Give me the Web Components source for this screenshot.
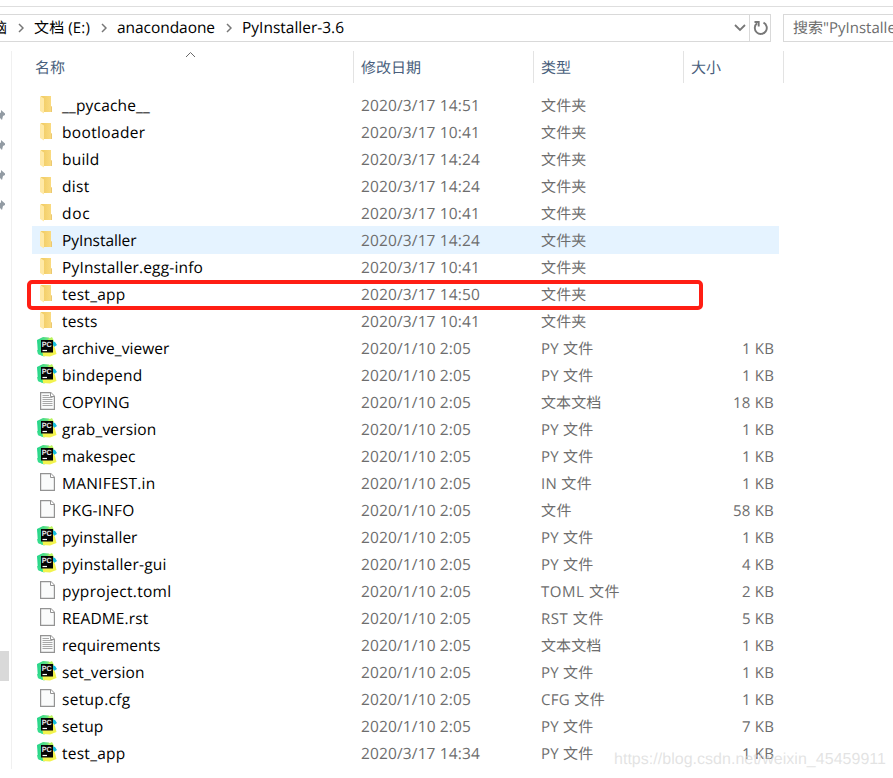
<!DOCTYPE html>
<html lang="zh-CN"><head><meta charset="utf-8"><title>PyInstaller-3.6</title>
<style>
html,body{margin:0;height:100%;overflow:hidden;background:#fff}
body{font:15px/27px "Open Sans","Noto Sans CJK SC",sans-serif;color:#000;text-rendering:geometricPrecision}
</style></head><body>
<explorer-window></explorer-window>
<script>
class FitText extends HTMLElement{
  connectedCallback(){
    const r=this.attachShadow({mode:'open'});
    r.innerHTML='<style>:host{display:inline-block;white-space:pre;vertical-align:top}span{display:inline-block;vertical-align:top}</style><span><slot></slot></span>';
    const s=r.querySelector('span'),w=+this.getAttribute('w');
    if(w){const n=this.textContent.length;s.style.letterSpacing=((w-s.getBoundingClientRect().width)/n).toFixed(3)+'px';}
  }
}
customElements.define('fit-text',FitText);

const folder='<svg width="12" height="18" viewBox="0 0 12 18"><defs><linearGradient id="g"><stop stop-color="#f0cb62"/><stop offset="1" stop-color="#fbdc83"/></linearGradient></defs><path d="M1 0H11V10.5H12V16H3Z" fill="url(#g)"/><path d="M0 0L4 2.6V17.6L0 15Z" fill="#ffe9a6"/><path d="M11 10.5h1V16h-1z" fill="#eac873"/></svg>';
const page=lines=>`<svg width="15" height="18" viewBox="0 0 15 18"><path d="M.6.6H10.7L14.4 4.3V17.4H.6Z" fill="#fafbfb" stroke="#939393" stroke-width="1.2"/><path d="M10.5.6V4.5H14.4" fill="#fff" stroke="#939393"/>${lines?'<path d="M2.5 3.5H9M2.5 5.5H12.5M2.5 7.5H12.5M2.5 9.5H12.5M2.5 11.5H12.5M2.5 13.5H12.5" stroke="#a8a8a8"/>':''}</svg>`;
const pc='<svg width="20" height="20" viewBox="0 0 20 20"><defs><linearGradient id="g" x1="0" x2="1"><stop stop-color="#20d58b"/><stop offset=".55" stop-color="#62e184"/><stop offset="1" stop-color="#b7f45b"/></linearGradient></defs><path d="M0 3L6 0 12 .5 16 4 17 14 7 19.5 1 17Z" fill="url(#g)"/><path d="M11 2L15 0 17 4 15 8Z" fill="#b8f35c"/><path d="M15 4L18 5 20 8 17 10 15 8Z" fill="#17bddc"/><path d="M16 8L18 11 19.5 17 13 19.5 6 19 5 15Z" fill="#f2f34e"/><path d="M0 13l5 1 1 5-5-2Z" fill="#35dd8c"/><path d="M4 3H16V15.5H4Z" fill="#050505"/><path d="M5.5 13.5H10" stroke="#fff" stroke-width="1.2"/><text x="4.8" y="9.5" font-family="Liberation Sans" font-size="7.5" font-weight="700" textLength="10" lengthAdjust="spacingAndGlyphs" fill="#e8e8e8">PC</text></svg>';
class FileIcon extends HTMLElement{
  connectedCallback(){
    const k=this.getAttribute('kind');
    this.attachShadow({mode:'open'}).innerHTML=`<style>:host{display:flex;width:30px;height:27px;box-sizing:border-box;padding:${k==='folder'?'5px 0 0 8px':k==='py'?'3px 0 0 5px':'4px 0 0 8px'}}svg{flex:none;display:block}</style>`+(k==='folder'?folder:k==='py'?pc:page(k==='txt'));
  }
}
customElements.define('file-icon',FileIcon);

const typeWidths={'PY 文件':52.5,'IN 文件':51,'TOML 文件':79,'RST 文件':63,'CFG 文件':64,'文本文档':60.5,'文件':31,'文件夹':45.5};
class FileRow extends HTMLElement{
  connectedCallback(){
    const a=n=>this.getAttribute(n)||'',d=a('date'),s=a('size');
    this.attachShadow({mode:'open'}).innerHTML=`<style>
    :host{display:grid;grid-template-columns:30px 299px 180px 140px 93px;height:27px;width:747px;color:#6d6d6d;position:relative}
    :host([hover])::before{content:"";position:absolute;inset:0 0 -1px;background:#e5f3ff;z-index:-1}
    :host([marked])::after{content:"";position:absolute;left:-5px;top:0;width:668px;height:22px;border:4px solid #ff1e14;border-radius:5px}
    span{white-space:pre;padding-top:2px;height:25px}.n,.d{font-size:15.5px;padding-top:1px}.n{color:#000}.s{text-align:right}</style>
    <file-icon kind="${a('icon')}"></file-icon><span class="n"><fit-text w="${a('w')}">${a('name')}</fit-text></span><span class="d"><fit-text w="${d.length>14?119:110}">${d}</fit-text></span><span><fit-text w="${typeWidths[a('type')]}">${a('type')}</fit-text></span><span class="s">${s?`<fit-text w="${s.length>4?41:32}">${s}</fit-text>`:''}</span>`;
  }
}
customElements.define('file-row',FileRow);

class ColumnHeader extends HTMLElement{
  connectedCallback(){
    this.attachShadow({mode:'open'}).innerHTML=`<style>
    :host{display:grid;grid-template-columns:342px 180px 150px 100px;height:32px;padding-top:9px;color:#4a5f7d;line-height:35px}
    div{box-sizing:border-box;height:32px;border-right:1px solid #e3e3e3;padding-left:7px;position:relative}div:first-of-type{padding-left:23px}
    svg{position:absolute;left:173px;top:0}</style>
    <div>名称<svg width="11" height="7" viewBox="0 0 11 7" fill="none" stroke="#696969"><path d="M1 6L5.5 1.5 10 6"/></svg></div><div>修改日期</div><div>类型</div><div>大小</div>`;
  }
}
customElements.define('column-header',ColumnHeader);

class AddressBar extends HTMLElement{
  connectedCallback(){
    const c='<svg width="6" height="10" viewBox="0 0 6 10" fill="none" stroke="#777" stroke-width="1.5"><path d="M1 1L5 5 1 9"/></svg>';
    this.attachShadow({mode:'open'}).innerHTML=`<style>
    :host{display:flex;gap:12px;height:28px;padding-top:7px;margin-top:6px;border-top:1px solid #dedede}
    .b{box-sizing:border-box;height:28px;border:1px solid #d9d9d9;display:flex;align-items:center;line-height:26px}
    .path{width:771px;border-left:0;overflow:hidden}.path>svg{flex:none}
    .p{flex:none;white-space:pre;height:26px;line-height:27px}.l{font-size:15.5px;line-height:25px}.cut{width:7px;display:flex;justify-content:flex-end;overflow:hidden;margin-right:11px}
    .drop{margin-left:auto;margin-right:3px}.re{box-sizing:border-box;flex:none;width:21px;height:26px;border-left:1px solid #d9d9d9;display:grid;place-items:center;padding-left:2px}
    .search{flex:1;overflow:hidden;border-right:0;padding-left:9px;color:#6d6d6d;white-space:nowrap}</style>
    <div class="b path"><span class="p cut">脑</span>${c}<span class="p" style="margin:0 11px 0 10px"><fit-text w="56">文档 (E:)</fit-text></span>${c}<span class="p l" style="margin:0 11px 0 10px"><fit-text w="98">anacondaone</fit-text></span>${c}<span class="p l" style="margin-left:10px"><fit-text w="102">PyInstaller-3.6</fit-text></span>
    <svg class="drop" width="12" height="8" viewBox="0 0 12 8" fill="none" stroke="#777" stroke-width="1.8"><path d="M1 1L6 6 11 1"/></svg>
    <div class="re"><svg width="16" height="16" viewBox="0 0 16 16" fill="none" stroke="#777" stroke-width="1.9"><path d="M4 3.3A6 6 0 1 0 10.5 2.6M1.5 2H5.7V6.5"/></svg></div></div>
    <div class="b search"><fit-text w="109">搜索"PyInstaller</fit-text></div>`;
  }
}
customElements.define('address-bar',AddressBar);

class NavEdge extends HTMLElement{
  connectedCallback(){
    const pin='<svg width="6" height="14" viewBox="0 0 6 14"><path d="M0 4L1 3.5V1L5 4.5V6L3 7 2 11 0 9Z" fill="#929ba3"/></svg>';
    this.attachShadow({mode:'open'}).innerHTML=`<style>:host{display:flex;flex-direction:column;width:11px;flex:none;margin-top:9px;border-right:1px solid #f0f0f0;height:718px}
    .pins{display:flex;flex-direction:column;gap:16px;padding-top:58px}svg{display:block}.thumb{width:9px;height:30px;background:#d9d9d9;margin-top:auto;margin-bottom:88px}</style><div class="pins">${pin.repeat(4)}</div><div class="thumb"></div>`;
  }
}
customElements.define('nav-edge',NavEdge);

const F='folder',P='py',T='txt',D='doc',A='2020/1/10 2:05',M='2020/3/17 ';
const files=[
[F,'__pycache__',88,M+'14:51'],[F,'bootloader',83.5,M+'10:41'],[F,'build',37.5,M+'14:24'],[F,'dist',27.5,M+'14:24'],[F,'doc',28.5,M+'10:41'],[F,'PyInstaller',74.5,M+'14:24'],[F,'PyInstaller.egg-info',141,M+'10:41'],[F,'test_app',63.5,M+'14:50'],[F,'tests',35.5,M+'10:41'],
[P,'archive_viewer',107.5,A,'PY 文件',1],[P,'bindepend',80.5,A,'PY 文件',1],[T,'COPYING',67.5,A,'文本文档',18],[P,'grab_version',94.5,A,'PY 文件',1],[P,'makespec',73.5,A,'PY 文件',1],[D,'MANIFEST.in',93.5,A,'IN 文件',1],[D,'PKG-INFO',72.5,A,'文件',58],[P,'pyinstaller',75.5,A,'PY 文件',1],[P,'pyinstaller-gui',104.5,A,'PY 文件',4],[D,'pyproject.toml',109.5,A,'TOML 文件',2],[D,'README.rst',86.5,A,'RST 文件',5],[T,'requirements',98.5,A,'文本文档',1],[P,'set_version',82.5,A,'PY 文件',1],[D,'setup.cfg',68.5,A,'CFG 文件',1],[P,'setup',41.5,A,'PY 文件',7],[P,'test_app',63.5,M+'14:34','PY 文件',1]];
class ExplorerWindow extends HTMLElement{
  connectedCallback(){
    this.attachShadow({mode:'open'}).innerHTML=`<style>:host{display:block;height:778px;overflow:hidden;position:relative;z-index:0}
    .body{display:flex}.list{display:block;padding:8px 0 0 20px}
    .mark{position:absolute;left:614px;top:749px;font:16px/22px "Liberation Sans",sans-serif;color:rgba(215,215,215,.7);white-space:pre}</style>
    <address-bar></address-bar><div class="body"><nav-edge></nav-edge><main><column-header></column-header><div class="list">${files.map((f,i)=>`<file-row icon="${f[0]}" name="${f[1]}" w="${f[2]}" date="${f[3]}" type="${f[4]||'文件夹'}" size="${f[5]?f[5]+' KB':''}" ${i===5?'hover':''} ${i===7?'marked':''}></file-row>`).join('')}</div></main></div>
    <div class="mark"><fit-text w="272">https://blog.csdn.net/weixin_45459911</fit-text></div>`;
  }
}
customElements.define('explorer-window',ExplorerWindow);
</script></body></html>
